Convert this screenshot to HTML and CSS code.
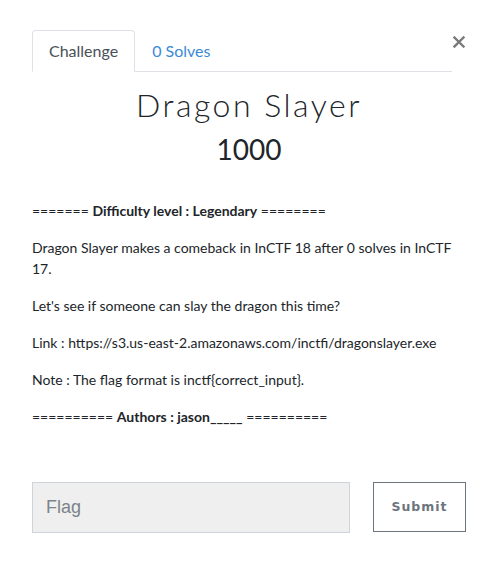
FILE: index.html
```html
<!DOCTYPE html>
<html>
<head>
<meta charset="utf-8">
<link rel="stylesheet" href="styles.css">
</head>
<body>
<div class="modal">
  <div class="header">
    <ul class="tabs">
      <li class="tab active">Challenge</li>
      <li class="tab link">0 Solves</li>
    </ul>
    <button class="close" aria-label="Close">
      <svg width="12" height="12" viewBox="0 0 12 12"><path d="M1.5 1.5 L10.5 10.5 M10.5 1.5 L1.5 10.5" stroke="#7a7a7a" stroke-width="2.4" stroke-linecap="square"/></svg>
    </button>
  </div>
  <h1 class="title">Dragon Slayer</h1>
  <h2 class="points">1000</h2>
  <div class="desc">
    <p>======= <strong>Difficulty level : Legendary</strong> ========</p>
    <p>Dragon Slayer makes a comeback in InCTF 18 after 0 solves in InCTF 17.</p>
    <p>Let's see if someone can slay the dragon this time?</p>
    <p>Link : https://s3.us-east-2.amazonaws.com/inctfi/dragonslayer.exe</p>
    <p>Note : The flag format is inctf{correct_input}.</p>
    <p>========== <strong>Authors : jason_____</strong> ==========</p>
  </div>
  <form class="submit-row">
    <input class="flag" type="text" placeholder="Flag">
    <button class="submit" type="button">Submit</button>
  </form>
</div>
</body>
</html>
```
FILE: styles.css
```css
* { box-sizing: border-box; }
body {
  margin: 0;
  background: #fff;
  font-family: Lato, "Open Sans", sans-serif;
  color: #212529;
}
.modal {
  padding: 30px 32px 0 32px;
  width: 498px;
}
.header {
  display: flex;
  align-items: flex-start;
  width: 434px;
}
.tabs {
  flex: 1;
  display: flex;
  margin: 0;
  padding: 0;
  list-style: none;
  border-bottom: 1px solid #dee2e6;
}
.tab {
  font-size: 16px;
  line-height: 24px;
  padding: 8px 16px;
  border: 1px solid transparent;
  border-top-left-radius: 4px;
  border-top-right-radius: 4px;
  margin-bottom: -1px;
}
.tab.active {
  color: #495057;
  border-color: #dee2e6 #dee2e6 #fff;
  background: #fff;
}
.tab.link {
  color: #3a8bd6;
}
.close {
  background: none;
  border: 0;
  padding: 0;
  margin: 6px 1px 0 1px;
  width: 12px;
  height: 12px;
  display: flex;
}
.title {
  margin: 14px 0 0;
  text-align: center;
  font-weight: 300;
  font-size: 32px;
  line-height: 1.2;
  letter-spacing: 2.5px;
  color: #212529;
}
.points {
  margin: 9px 0 0;
  text-align: center;
  font-weight: 400;
  font-size: 28px;
  line-height: 1.2;
  color: #212529;
}
.desc {
  margin-top: 33px;
  font-size: 14px;
  line-height: 21px;
  color: #212529;
}
.desc p {
  margin: 0 0 16px;
}
.desc strong { font-weight: 700; }
.submit-row {
  display: flex;
  gap: 23px;
  margin-top: 55px;
}
.flag {
  width: 318px;
  height: 51px;
  border: 1px solid #ced4da;
  background: #efefef;
  padding: 0 13px;
  font-family: "Liberation Sans", Arial, sans-serif;
  font-size: 18px;
  color: #495057;
}
.flag::placeholder { color: #7b848c; }
.submit {
  width: 93px;
  height: 50px;
  border: 1px solid #6c757d;
  background: #fff;
  color: #6c757d;
  font-family: "DejaVu Sans", sans-serif;
  font-weight: 700;
  font-size: 12.5px;
  letter-spacing: 1px;
}
```
